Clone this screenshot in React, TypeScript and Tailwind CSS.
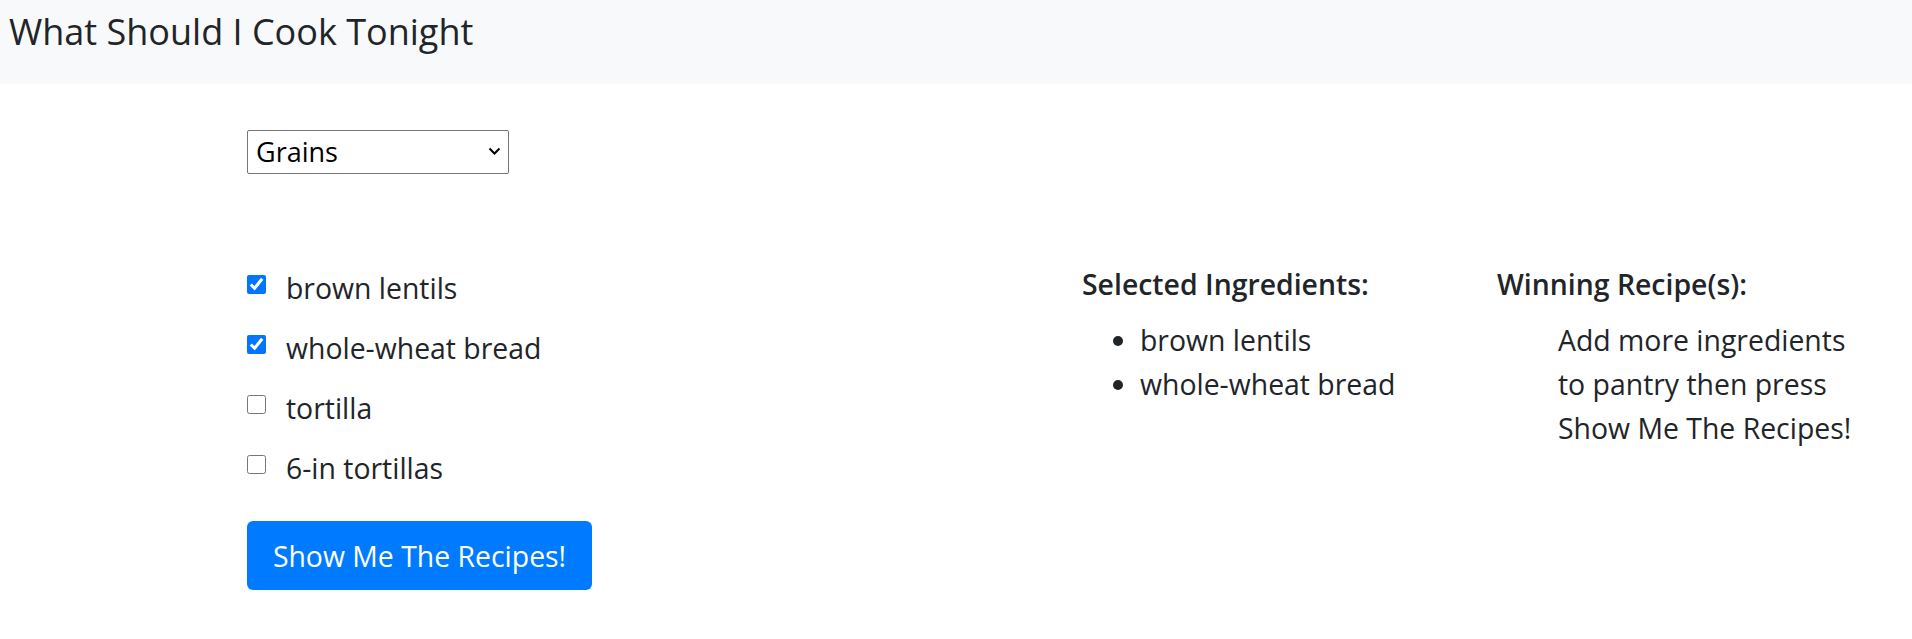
import React from "react";

const font = { fontFamily: '"Open Sans", "Noto Sans", sans-serif' };

function Check({ label, checked, last }: { label: string; checked: boolean; last?: boolean }) {
  return (
    <div className={`flex items-start h-[44px] ${last ? "" : "mb-[16px]"}`}>
      <input
        type="checkbox"
        defaultChecked={checked}
        className="w-[19px] h-[19px] mt-[9px] mr-[20px] accent-[#0075ff]"
      />
      <span className="text-[28.4px] leading-[44px]">{label}</span>
    </div>
  );
}

export default function App() {
  return (
    <div className="min-h-screen bg-white text-[#212529]" style={font}>
      <nav className="h-[84px] bg-[#f8f9fa] flex items-start pt-[7px] pl-[9px]">
        <span className="text-[36px] leading-[50px]">What Should I Cook Tonight</span>
      </nav>
      <div className="pl-[247px] pt-[46px]">
        <div className="relative w-[262px] h-[44px]">
          <select className="appearance-none w-full h-full border border-[#767676] rounded-[2px] pl-[8px] text-[27px] leading-[40px] bg-white text-black">
            <option>Grains</option>
            <option>Proteins</option>
            <option>Vegetables</option>
          </select>
          <svg className="absolute right-[8px] top-[17px] pointer-events-none" width="13" height="9" viewBox="0 0 13 9">
            <path d="M1.5 1.5 L6.5 6.5 L11.5 1.5" fill="none" stroke="#000" strokeWidth="2" />
          </svg>
        </div>
        <div className="flex mt-[88px]">
          <div className="w-[835px] pt-[4px]">
            <Check label="brown lentils" checked />
            <Check label="whole-wheat bread" checked />
            <Check label="tortilla" checked={false} />
            <Check label="6-in tortillas" checked={false} last />
            <button className="mt-[31px] h-[69px] w-[345px] rounded-[6px] bg-[#007bff] text-white text-[28.4px] leading-[44px]">
              Show Me The Recipes!
            </button>
          </div>
          <div className="w-[415px]">
            <div className="text-[28.4px] leading-[44px] font-semibold mb-[12px]">Selected Ingredients:</div>
            <ul className="list-disc pl-[58px] text-[28.4px] leading-[44px]">
              <li>brown lentils</li>
              <li>whole-wheat bread</li>
            </ul>
          </div>
          <div>
            <div className="text-[28.4px] leading-[44px] font-semibold mb-[12px]">Winning Recipe(s):</div>
            <div className="pl-[61px] text-[28.4px] leading-[44px]">
              Add more ingredients
              <br />
              to pantry then press
              <br />
              Show Me The Recipes!
            </div>
          </div>
        </div>
      </div>
    </div>
  );
}
